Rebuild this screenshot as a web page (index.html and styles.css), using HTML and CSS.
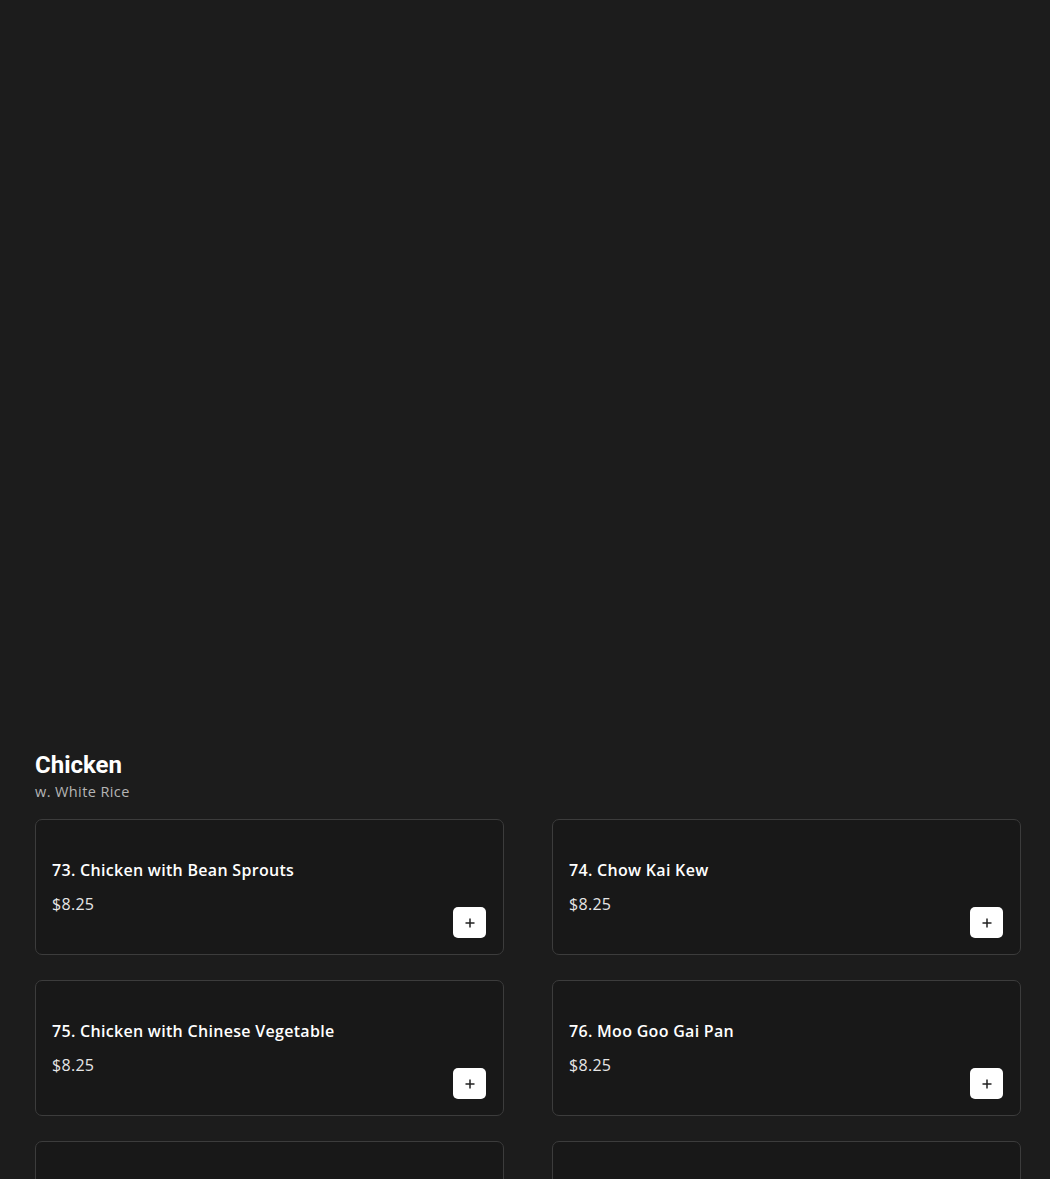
FILE: index.html
```html
<!DOCTYPE html>
<html>
<head>
<meta charset="utf-8">
<link rel="stylesheet" href="styles.css">
</head>
<body>
<div class="page">
  <section class="category">
    <h2 class="cat-title">Chicken</h2>
    <p class="cat-sub">w. White Rice</p>
    <div class="grid">
      <div class="card">
        <div class="info">
          <div class="name">73. Chicken with Bean Sprouts</div>
          <div class="price">$8.25</div>
        </div>
        <button class="add"><svg width="12" height="12" viewBox="0 0 12 12"><path d="M6 1.5v9M1.5 6h9" stroke="#222" stroke-width="1.5" fill="none"/></svg></button>
      </div>
      <div class="card">
        <div class="info">
          <div class="name">74. Chow Kai Kew</div>
          <div class="price">$8.25</div>
        </div>
        <button class="add"><svg width="12" height="12" viewBox="0 0 12 12"><path d="M6 1.5v9M1.5 6h9" stroke="#222" stroke-width="1.5" fill="none"/></svg></button>
      </div>
      <div class="card">
        <div class="info">
          <div class="name">75. Chicken with Chinese Vegetable</div>
          <div class="price">$8.25</div>
        </div>
        <button class="add"><svg width="12" height="12" viewBox="0 0 12 12"><path d="M6 1.5v9M1.5 6h9" stroke="#222" stroke-width="1.5" fill="none"/></svg></button>
      </div>
      <div class="card">
        <div class="info">
          <div class="name">76. Moo Goo Gai Pan</div>
          <div class="price">$8.25</div>
        </div>
        <button class="add"><svg width="12" height="12" viewBox="0 0 12 12"><path d="M6 1.5v9M1.5 6h9" stroke="#222" stroke-width="1.5" fill="none"/></svg></button>
      </div>
      <div class="card">
        <div class="info">
          <div class="name">77. Chicken with Broccoli</div>
          <div class="price">$8.25</div>
        </div>
        <button class="add"><svg width="12" height="12" viewBox="0 0 12 12"><path d="M6 1.5v9M1.5 6h9" stroke="#222" stroke-width="1.5" fill="none"/></svg></button>
      </div>
      <div class="card">
        <div class="info">
          <div class="name">78. Chicken with Mushroom</div>
          <div class="price">$8.25</div>
        </div>
        <button class="add"><svg width="12" height="12" viewBox="0 0 12 12"><path d="M6 1.5v9M1.5 6h9" stroke="#222" stroke-width="1.5" fill="none"/></svg></button>
      </div>
    </div>
  </section>
</div>
</body>
</html>
```

FILE: styles.css
```css
html, body {
  margin: 0;
  padding: 0;
  background: #1c1c1c;
}
body {
  font-family: "Open Sans", "Noto Sans", sans-serif;
  color: #fff;
}
.page {
  padding: 751px 29px 40px 35px;
}
.cat-title {
  margin: 0;
  font-family: Roboto, "Liberation Sans", sans-serif;
  font-weight: 700;
  font-size: 24px;
  line-height: 28px;
  color: #fff;
}
.cat-sub {
  margin: 3px 0 0;
  font-size: 14.5px;
  line-height: 20px;
  letter-spacing: 0.4px;
  color: #b5b5b5;
}
.grid {
  display: grid;
  grid-template-columns: 1fr 1fr;
  column-gap: 48px;
  row-gap: 25px;
  margin-top: 17px;
}
.card {
  box-sizing: border-box;
  height: 136px;
  background: #181818;
  border: 1px solid #3c3c3c;
  border-radius: 7px;
  padding: 40px 17px 16px 16px;
  display: flex;
  justify-content: space-between;
}
.info {
  display: flex;
  flex-direction: column;
  gap: 14px;
}
.name {
  font-size: 16px;
  line-height: 20px;
  font-weight: 600;
  color: #fff;
  letter-spacing: 0.3px;
}
.price {
  font-size: 16px;
  line-height: 20px;
  letter-spacing: 0.3px;
  color: #e6e6e6;
}
.add {
  align-self: flex-end;
  width: 33px;
  height: 31px;
  background: #fff;
  border: none;
  border-radius: 5px;
  display: flex;
  align-items: center;
  justify-content: center;
  padding: 0;
}
```
